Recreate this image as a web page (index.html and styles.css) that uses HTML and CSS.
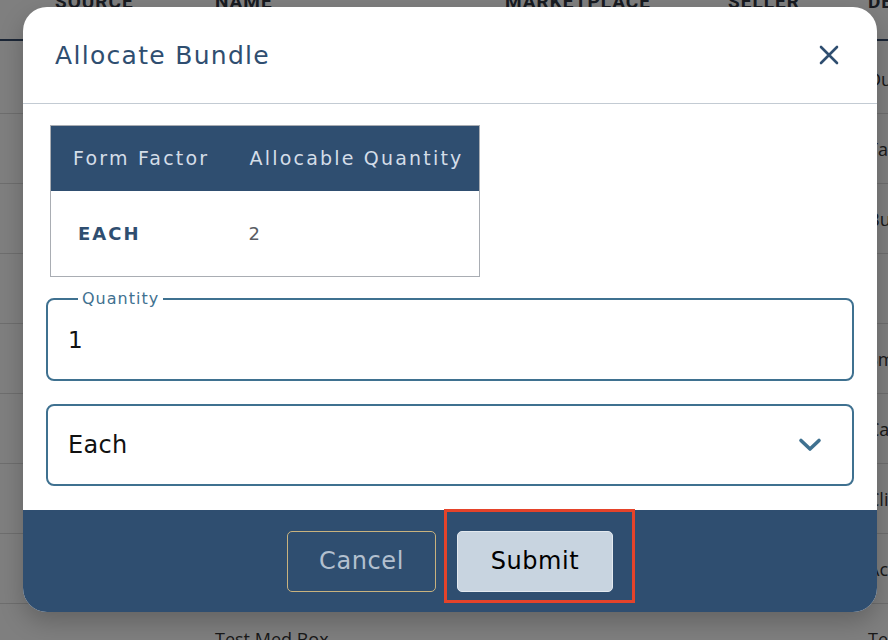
FILE: index.html
```html
<!DOCTYPE html>
<html>
<head>
<meta charset="utf-8">
<link rel="stylesheet" href="styles.css">
</head>
<body>
<div class="page">
  <div class="thead">
    <span>SOURCE</span><span>NAME</span><span>MARKETPLACE</span><span>SELLER</span><span>DESCRIPTION</span>
  </div>
  <div class="trow"><span>Amazon</span><span>Dual Pack</span><span>US</span><span>Main</span><span>Dual Pack</span></div>
  <div class="trow"><span>Amazon</span><span>Tablet Kit</span><span>US</span><span>Main</span><span>Tablet Kit</span></div>
  <div class="trow"><span>Amazon</span><span>Bundle Box</span><span>US</span><span>Main</span><span>Bundle Box</span></div>
  <div class="trow"><span></span><span></span><span></span><span></span><span></span></div>
  <div class="trow"><span>Amazon</span><span>Small Kit</span><span>US</span><span>Main</span><span>Small Kit</span></div>
  <div class="trow"><span>Amazon</span><span>Case Set</span><span>US</span><span>Main</span><span>Case Set</span></div>
  <div class="trow"><span>Amazon</span><span>Clip Pack</span><span>US</span><span>Main</span><span>Clip Pack</span></div>
  <div class="trow"><span>Amazon</span><span>Accessory Kit</span><span>US</span><span>Main</span><span>Accessory</span></div>
  <div class="trow"><span></span><span>Test Med Box</span><span></span><span></span><span>Test Med Box</span></div>
</div>
<div class="backdrop"></div>
<div class="modal">
  <div class="modal-head">
    <h2 class="modal-title">Allocate Bundle</h2>
    <button class="close" aria-label="Close">
      <svg width="20" height="20" viewBox="0 0 20 20"><path d="M2 2 L18 18 M18 2 L2 18" stroke="#2f4e70" stroke-width="2.6" stroke-linecap="round" fill="none"/></svg>
    </button>
  </div>
  <div class="modal-body">
    <table class="alloc">
      <colgroup><col class="c1"><col class="c2"></colgroup>
      <thead><tr><th>Form Factor</th><th>Allocable Quantity</th></tr></thead>
      <tbody><tr><td class="ff">EACH</td><td class="qty">2</td></tr></tbody>
    </table>
    <fieldset class="field">
      <legend>Quantity</legend>
      <input class="field-input" type="text" value="1">
    </fieldset>
    <div class="select">
      <span>Each</span>
      <svg width="24" height="16" viewBox="0 0 24 16"><path d="M3 3.5 L12 12 L21 3.5" stroke="#3f7190" stroke-width="3.6" stroke-linecap="round" stroke-linejoin="round" fill="none"/></svg>
    </div>
  </div>
  <div class="modal-foot">
    <button class="btn cancel">Cancel</button>
    <div class="submit-wrap">
      <button class="btn submit">Submit</button>
      <span class="highlight"></span>
    </div>
  </div>
</div>
</body>
</html>
```

FILE: styles.css
```css
* { box-sizing: border-box; }
html, body { margin: 0; padding: 0; }
body {
  width: 888px;
  height: 640px;
  overflow: hidden;
  background: #ffffff;
  font-family: "DejaVu Sans", "Open Sans", sans-serif;
  position: relative;
}
.page {
  margin-top: -10px;
  height: 650px;
  overflow: hidden;
}
.thead {
  display: grid;
  grid-template-columns: 160px 290px 223px 140px 1fr;
  padding-left: 55px;
  height: 51px;
  margin-bottom: 3px;
  border-bottom: 2px solid #364c6c;
  font-family: Roboto, "Liberation Sans", sans-serif;
  font-weight: 700;
  font-size: 19px;
  letter-spacing: 1px;
  color: #303642;
  white-space: nowrap;
  overflow: hidden;
}
.trow {
  display: grid;
  grid-template-columns: 160px 290px 223px 140px 1fr;
  padding-left: 55px;
  height: 70px;
  align-items: center;
  border-bottom: 1px solid #dcdcdc;
  font-family: "Open Sans", sans-serif;
  font-size: 18px;
  color: #333;
  white-space: nowrap;
  overflow: hidden;
}
.backdrop {
  position: absolute;
  inset: 0;
  background: rgba(0, 0, 0, 0.5);
}
.modal {
  position: absolute;
  left: 23px;
  top: 7px;
  width: 854px;
  height: 605px;
  background: #fff;
  border-radius: 24px;
  overflow: hidden;
  display: flex;
  flex-direction: column;
  box-shadow: 0 10px 24px rgba(0,0,0,0.22);
}
.modal-head {
  height: 97px;
  flex: none;
  display: flex;
  align-items: center;
  justify-content: space-between;
  padding: 0 38px 0 32px;
  border-bottom: 1px solid #c3cbd3;
}
.modal-title {
  margin: 0;
  font-size: 25px;
  font-weight: 400;
  color: #2f4e70;
  letter-spacing: 1.3px;
}
.close {
  border: none;
  background: none;
  padding: 0;
  width: 20px;
  height: 20px;
  display: flex;
  margin-top: -1px;
}
.modal-body {
  flex: 1;
  padding: 21px 23px 23px;
  display: flex;
  flex-direction: column;
}
.alloc {
  margin-left: 4px;
  width: 429px;
  table-layout: fixed;
  border-collapse: collapse;
  border: 1px solid #a9adb3;
}
.alloc .c1 { width: 185px; }
.alloc .c2 { width: 244px; }
.alloc th {
  background: #2f4e70;
  color: #d4dde8;
  font-weight: 400;
  font-size: 19px;
  letter-spacing: 2.2px;
  text-align: left;
  height: 65px;
  padding: 0 0 0 22px;
  white-space: nowrap;
}
.alloc th + th { padding-left: 14px; }
.alloc td {
  height: 86px;
  font-size: 18px;
  padding: 0 0 0 27px;
}
.alloc td.ff {
  color: #2f4e70;
  font-weight: 700;
  letter-spacing: 2px;
}
.alloc td.qty {
  color: #5a5d63;
  padding-left: 13px;
}
.field {
  margin: 13px 0 0;
  padding: 0 20px;
  border: 2px solid #3f7190;
  border-radius: 8px;
  min-width: 0;
}
.field legend {
  margin-left: 10px;
  padding: 0 4px;
  font-size: 16px;
  line-height: 18px;
  letter-spacing: 1px;
  color: #3f7190;
}
.field-input {
  display: block;
  width: 100%;
  height: 71px;
  border: none;
  outline: none;
  padding: 0 0 7px;
  font-family: "DejaVu Sans", "Open Sans", sans-serif;
  font-size: 23px;
  color: #111;
  background: transparent;
}
.select {
  margin-top: 23px;
  height: 82px;
  border: 2px solid #3f7190;
  border-radius: 8px;
  display: flex;
  align-items: center;
  justify-content: space-between;
  padding: 0 30px 0 20px;
  font-size: 24px;
  letter-spacing: 0.3px;
  color: #111;
}
.modal-foot {
  height: 102px;
  flex: none;
  background: #2f4e70;
  display: flex;
  align-items: center;
  justify-content: center;
  gap: 21px;
}
.btn {
  height: 61px;
  border-radius: 5px;
  font-family: "DejaVu Sans", "Open Sans", sans-serif;
  font-size: 24px;
  font-weight: 400;
  letter-spacing: 0.6px;
  cursor: pointer;
}
.cancel {
  width: 149px;
  background: transparent;
  border: 1px solid #c8b27e;
  color: #b3c0cf;
}
.submit-wrap {
  position: relative;
  display: flex;
}
.submit {
  width: 156px;
  background: #c8d4e0;
  border: 1px solid #e3e9ef;
  color: #000;
}
.highlight {
  position: absolute;
  left: -13px;
  top: -22px;
  right: -22px;
  bottom: -11px;
  border: 3px solid #e5432a;
  pointer-events: none;
}
```
